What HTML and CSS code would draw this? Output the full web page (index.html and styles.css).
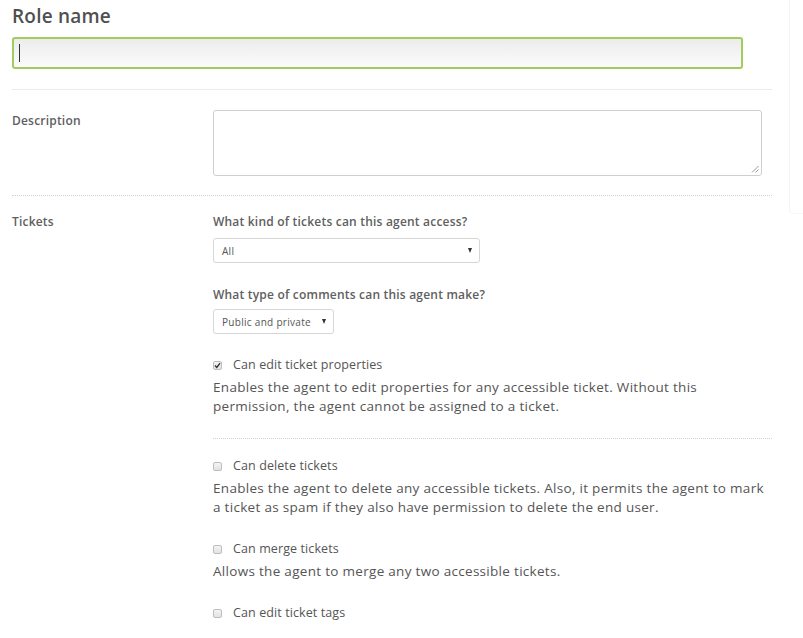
FILE: index.html
```html
<!DOCTYPE html>
<html lang="en">
<head>
<meta charset="utf-8">
<title>Role</title>
<link rel="stylesheet" href="styles.css">
</head>
<body>
<div class="page">
  <div class="form">
    <h1 class="title">Role name</h1>
    <div class="name-input"><span class="caret"></span></div>
    <div class="sep solid"></div>

    <div class="row">
      <div class="label desc-label">Description</div>
      <div class="field">
        <div class="textarea">
          <svg class="grip" width="8" height="8" viewBox="0 0 8 8"><path d="M1 7.5 L7.5 1 M4.5 7.5 L7.5 4.5" stroke="#9a9a9a" stroke-width="1" fill="none"/></svg>
        </div>
      </div>
    </div>
    <div class="sep dotted"></div>

    <div class="row tickets">
      <div class="label">Tickets</div>
      <div class="field">
        <div class="question">What kind of tickets can this agent access?</div>
        <div class="select wide"><span>All</span><span class="arrow"></span></div>
        <div class="question second">What type of comments can this agent make?</div>
        <div class="select narrow"><span>Public and private</span><span class="arrow"></span></div>

        <div class="perm first">
          <div class="check-line"><span class="box checked"><svg width="7" height="7" viewBox="0 0 7 7"><path d="M1 3.6 L2.8 5.4 L6 1.2" stroke="#333" stroke-width="1.4" fill="none"/></svg></span><span class="check-label">Can edit ticket properties</span></div>
          <p class="desc">Enables the agent to edit properties for any accessible ticket. Without this permission, the agent cannot be assigned to a ticket.</p>
        </div>
        <div class="sep dotted inner"></div>
        <div class="perm">
          <div class="check-line"><span class="box"></span><span class="check-label">Can delete tickets</span></div>
          <p class="desc">Enables the agent to delete any accessible tickets. Also, it permits the agent to mark a ticket as spam if they also have permission to delete the end user.</p>
        </div>
        <div class="perm">
          <div class="check-line"><span class="box"></span><span class="check-label">Can merge tickets</span></div>
          <p class="desc">Allows the agent to merge any two accessible tickets.</p>
        </div>
        <div class="perm">
          <div class="check-line"><span class="box"></span><span class="check-label">Can edit ticket tags</span></div>
        </div>
      </div>
    </div>
  </div>
  <div class="side-panel"></div>
</div>
</body>
</html>
```
FILE: styles.css
```css
html, body {
  margin: 0;
  padding: 0;
  background: #fff;
}
body {
  font-family: "Open Sans", "Liberation Sans", sans-serif;
  color: #555;
  overflow: hidden;
}
.page {
  display: flex;
  align-items: flex-start;
  width: 803px;
  height: 638px;
}
.form {
  width: 760px;
  padding-left: 12px;
  flex: 0 0 auto;
}
.side-panel {
  margin-left: 17px;
  width: 14px;
  height: 213px;
  border-left: 1px solid #f4f4f4;
  border-bottom: 1px solid #f8f8f8;
  border-bottom-left-radius: 4px;
}
.title {
  margin: 0;
  padding-top: 5px;
  height: 23px;
  margin-bottom: 9px;
  font-size: 19px;
  line-height: 23px;
  font-weight: 600;
  color: #505050;
  letter-spacing: 0.2px;
}
.name-input {
  box-sizing: border-box;
  width: 731px;
  height: 32px;
  border: 2px solid #a3cc5e;
  border-radius: 3px;
  background: linear-gradient(#ececec, #fbfbfb);
  display: flex;
  align-items: center;
  padding-left: 5px;
}
.caret {
  width: 1px;
  height: 18px;
  background: #333;
}
.sep {
  height: 0;
  width: 760px;
}
.sep.solid {
  margin-top: 20px;
  border-top: 1px solid #ececec;
}
.sep.dotted {
  margin-top: 19px;
  border-top: 1px dotted #d0d0d0;
}
.row {
  display: flex;
  margin-top: 20px;
}
.row.tickets {
  margin-top: 19px;
}
.label {
  width: 201px;
  flex: 0 0 auto;
  font-size: 12px;
  line-height: 14px;
  font-weight: 600;
  letter-spacing: 0.2px;
  color: #606060;
}
.label.desc-label {
  padding-top: 4px;
}
.field {
  flex: 0 0 auto;
  width: 559px;
}
.textarea {
  box-sizing: border-box;
  width: 549px;
  height: 66px;
  border: 1px solid #cfcfcf;
  border-radius: 3px;
  display: flex;
  justify-content: flex-end;
  align-items: flex-end;
  padding: 0 2px 2px 0;
}
.question {
  font-size: 12px;
  line-height: 14px;
  font-weight: 600;
  letter-spacing: 0.2px;
  color: #606060;
}
.question.second {
  margin-top: 25px;
}
.select {
  box-sizing: border-box;
  height: 25px;
  margin-top: 9px;
  border: 1px solid #d6d6d6;
  border-radius: 3px;
  display: flex;
  align-items: center;
  justify-content: space-between;
  padding: 0 7px 0 8px;
  font-size: 10px;
  letter-spacing: 0.3px;
  color: #555;
}
.select.wide {
  width: 267px;
}
.select.narrow {
  width: 121px;
  margin-top: 7px;
}
.arrow {
  width: 0;
  height: 0;
  border-left: 2.5px solid transparent;
  border-right: 2.5px solid transparent;
  border-top: 5px solid #333;
}
.perm {
  margin-top: 25px;
}
.perm.first {
  margin-top: 24px;
}
.check-line {
  display: flex;
  align-items: center;
  height: 14px;
}
.box {
  box-sizing: border-box;
  width: 9px;
  height: 9px;
  border: 1px solid #bdbdbd;
  border-radius: 2px;
  background: linear-gradient(#f4f4f4, #e2e2e2);
  display: flex;
  align-items: center;
  justify-content: center;
  margin-right: 11px;
}
.check-label {
  font-size: 12.5px;
  line-height: 14px;
  letter-spacing: 0.1px;
  color: #555;
}
.desc {
  margin: 6px 0 0 0;
  width: 551px;
  font-size: 13.5px;
  line-height: 19px;
  letter-spacing: 0.3px;
  color: #555;
}
.sep.dotted.inner {
  width: 559px;
  margin-top: 22px;
}
.sep.dotted.inner + .perm {
  margin-top: 20px;
}
```
